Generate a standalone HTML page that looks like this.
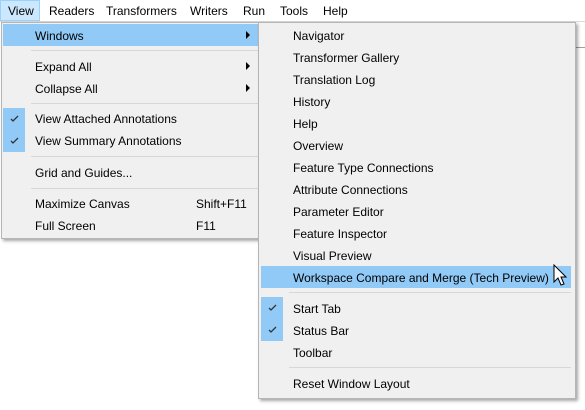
<!DOCTYPE html>
<html><head><style>
body{margin:0;width:585px;height:410px;background:#fff;position:relative;overflow:hidden;font-family:"Liberation Sans",sans-serif;font-size:12px;color:#000}
.a{position:absolute;white-space:nowrap}
.bar{position:absolute;left:0;top:0;width:585px;height:21px;background:#fff;border-bottom:1px solid #d9d9d9}
.menu{position:absolute;background:#f0f0f0;border:1px solid #b5b5b5;box-shadow:2px 2px 3px rgba(0,0,0,.35)}
.sep{position:absolute;height:1px;background:#d7d7d7}
.hl{position:absolute;background:#91c9f7}
.ck{position:absolute;background:#91c9f7;width:22px;height:22px}
.tri{position:absolute;width:0;height:0;border-top:4px solid transparent;border-bottom:4px solid transparent;border-left:4px solid #000}
</style></head><body>
<div class="bar"></div>
<div class="a" style="left:0;top:0;width:40px;height:21px;background:#cce8ff;border:1px solid #99d1ff;box-sizing:border-box"></div>
<div class="a" style="left:8px;top:4px">View</div>
<div class="a" style="left:49px;top:4px">Readers</div>
<div class="a" style="left:106px;top:4px">Transformers</div>
<div class="a" style="left:190px;top:4px">Writers</div>
<div class="a" style="left:243px;top:4px">Run</div>
<div class="a" style="left:280px;top:4px">Tools</div>
<div class="a" style="left:323px;top:4px">Help</div>
<div class="a" style="left:575px;top:47px;width:10px;height:1px;background:#a0a0a0"></div>

<div class="menu" style="left:1px;top:22px;width:257px;height:215px"></div>
<div class="hl" style="left:3px;top:24px;width:255px;height:22px"></div>
<div class="a" style="left:35px;top:29px">Windows</div>
<div class="tri" style="left:246px;top:31px"></div>
<div class="sep" style="left:31px;top:50px;width:227px"></div>
<div class="a" style="left:35px;top:60px">Expand All</div>
<div class="tri" style="left:246px;top:62px"></div>
<div class="a" style="left:35px;top:82px">Collapse All</div>
<div class="tri" style="left:246px;top:84px"></div>
<div class="sep" style="left:31px;top:103px;width:227px"></div>
<div class="ck" style="left:3px;top:108px"></div>
<div class="ck" style="left:3px;top:130px"></div>
<svg class="a" style="left:3px;top:108px" width="22" height="44"><path d="M8 11 L10 13 L15 8" fill="none" stroke="#333" stroke-width="1.3"/><path d="M8 33 L10 35 L15 30" fill="none" stroke="#333" stroke-width="1.3"/></svg>
<div class="a" style="left:35px;top:112px">View Attached Annotations</div>
<div class="a" style="left:35px;top:134px">View Summary Annotations</div>
<div class="sep" style="left:31px;top:156px;width:227px"></div>
<div class="a" style="left:35px;top:166px">Grid and Guides...</div>
<div class="sep" style="left:31px;top:188px;width:227px"></div>
<div class="a" style="left:35px;top:197px">Maximize Canvas</div>
<div class="a" style="left:196px;top:197px">Shift+F11</div>
<div class="a" style="left:35px;top:219px">Full Screen</div>
<div class="a" style="left:196px;top:219px">F11</div>

<div class="menu" style="left:258px;top:22px;width:316px;height:375px"></div>
<div class="hl" style="left:261px;top:266px;width:310px;height:22px"></div>
<div class="a" style="left:293px;top:29px">Navigator</div>
<div class="a" style="left:293px;top:51px">Transformer Gallery</div>
<div class="a" style="left:293px;top:73px">Translation Log</div>
<div class="a" style="left:293px;top:95px">History</div>
<div class="a" style="left:293px;top:117px">Help</div>
<div class="a" style="left:293px;top:139px">Overview</div>
<div class="a" style="left:293px;top:161px">Feature Type Connections</div>
<div class="a" style="left:293px;top:183px">Attribute Connections</div>
<div class="a" style="left:293px;top:205px">Parameter Editor</div>
<div class="a" style="left:293px;top:227px">Feature Inspector</div>
<div class="a" style="left:293px;top:249px">Visual Preview</div>
<div class="a" style="left:293px;top:271px">Workspace Compare and Merge (Tech Preview)</div>
<div class="sep" style="left:289px;top:292px;width:282px"></div>
<div class="ck" style="left:261px;top:297px"></div>
<div class="ck" style="left:261px;top:319px"></div>
<svg class="a" style="left:261px;top:297px" width="22" height="44"><path d="M8 11 L10 13 L15 8" fill="none" stroke="#333" stroke-width="1.3"/><path d="M8 33 L10 35 L15 30" fill="none" stroke="#333" stroke-width="1.3"/></svg>
<div class="a" style="left:293px;top:302px">Start Tab</div>
<div class="a" style="left:293px;top:324px">Status Bar</div>
<div class="a" style="left:293px;top:346px">Toolbar</div>
<div class="sep" style="left:289px;top:367px;width:282px"></div>
<div class="a" style="left:293px;top:377px">Reset Window Layout</div>

<svg class="a" style="left:553px;top:264px" width="16" height="26" viewBox="0 0 16 26"><path d="M1 1 L1 18 L5 14 L8 21 L11 20 L8 13 L13 13 Z" fill="#fff" stroke="#000" stroke-width="1"/></svg>
</body></html>
